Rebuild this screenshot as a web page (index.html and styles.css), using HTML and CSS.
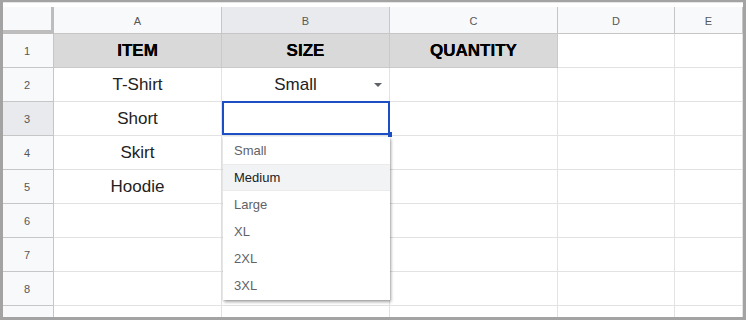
FILE: index.html
```html
<!DOCTYPE html>
<html>
<head>
<meta charset="utf-8">
<link rel="stylesheet" href="styles.css">
</head>
<body>
<div class="frame">
  <div class="sheet">
    <div class="corner"></div>
    <div class="colhead">A</div>
    <div class="colhead active">B</div>
    <div class="colhead">C</div>
    <div class="colhead">D</div>
    <div class="colhead">E</div>

    <div class="rowhead">1</div>
    <div class="cell title">ITEM</div>
    <div class="cell title">SIZE</div>
    <div class="cell title">QUANTITY</div>
    <div class="cell"></div>
    <div class="cell"></div>

    <div class="rowhead">2</div>
    <div class="cell">T-Shirt</div>
    <div class="cell chip">Small<span class="caret"></span></div>
    <div class="cell"></div>
    <div class="cell"></div>
    <div class="cell"></div>

    <div class="rowhead active">3</div>
    <div class="cell">Short</div>
    <div class="cell selected">
      <div class="menu">
        <div class="item">Small</div>
        <div class="item hover">Medium</div>
        <div class="item">Large</div>
        <div class="item">XL</div>
        <div class="item">2XL</div>
        <div class="item">3XL</div>
      </div>
    </div>
    <div class="cell"></div>
    <div class="cell"></div>
    <div class="cell"></div>

    <div class="rowhead">4</div>
    <div class="cell">Skirt</div>
    <div class="cell"></div>
    <div class="cell"></div>
    <div class="cell"></div>
    <div class="cell"></div>

    <div class="rowhead">5</div>
    <div class="cell">Hoodie</div>
    <div class="cell"></div>
    <div class="cell"></div>
    <div class="cell"></div>
    <div class="cell"></div>

    <div class="rowhead">6</div>
    <div class="cell"></div>
    <div class="cell"></div>
    <div class="cell"></div>
    <div class="cell"></div>
    <div class="cell"></div>

    <div class="rowhead">7</div>
    <div class="cell"></div>
    <div class="cell"></div>
    <div class="cell"></div>
    <div class="cell"></div>
    <div class="cell"></div>

    <div class="rowhead">8</div>
    <div class="cell"></div>
    <div class="cell"></div>
    <div class="cell"></div>
    <div class="cell"></div>
    <div class="cell"></div>

    <div class="rowhead">9</div>
    <div class="cell"></div>
    <div class="cell"></div>
    <div class="cell"></div>
    <div class="cell"></div>
    <div class="cell"></div>
  </div>
</div>
</body>
</html>
```

FILE: styles.css
```css
html, body {
  margin: 0;
  padding: 0;
  background: #ffffff;
}

.frame {
  width: 746px;
  height: 320px;
  box-sizing: border-box;
  border-style: solid;
  border-color: #a3a3a3;
  border-width: 2px 3px 3px 3px;
  overflow: hidden;
  background: #ffffff;
  font-family: "Liberation Sans", Arial, sans-serif;
}

.sheet {
  padding-top: 4px;
  display: grid;
  grid-template-columns: 51px 168px 168px 168px 117px 1fr;
  grid-template-rows: 27px;
  grid-auto-rows: 34px;
  border-top: 1px solid #e6e6e6;
}

.corner {
  background: #f8f9fa;
  border-right: 3px solid #bdbdbd;
  border-bottom: 4px solid #bdbdbd;
  box-sizing: border-box;
}

.colhead {
  background: #f8f9fa;
  border-right: 1px solid #c6c6c6;
  border-bottom: 1px solid #c6c6c6;
  box-sizing: border-box;
  display: flex;
  align-items: center;
  justify-content: center;
  font-size: 11px;
  color: #575757;
  padding-top: 1px;
}

.rowhead {
  background: #f8f9fa;
  border-right: 1px solid #c6c6c6;
  border-bottom: 1px solid #c6c6c6;
  box-sizing: border-box;
  display: flex;
  align-items: center;
  justify-content: center;
  font-size: 11px;
  color: #575757;
  padding-right: 2px;
}

.colhead.active,
.rowhead.active {
  background: #e8eaed;
}

.cell {
  border-right: 1px solid #e2e2e2;
  border-bottom: 1px solid #e2e2e2;
  box-sizing: border-box;
  display: flex;
  align-items: center;
  justify-content: center;
  font-size: 17px;
  color: #222222;
  position: relative;
}

.cell.title {
  background: #d9d9d9;
  border-right-color: #c9c9c9;
  border-bottom-color: #c9c9c9;
  font-weight: bold;
  color: #000000;
  text-shadow: 0 0 0.6px #000000;
}

.cell.chip {
  padding-right: 20px;
}

.caret {
  position: absolute;
  right: 7px;
  top: 15px;
  width: 0;
  height: 0;
  border-left: 4px solid transparent;
  border-right: 4px solid transparent;
  border-top: 4px solid #5f6368;
}

.cell.selected::after {
  content: "";
  position: absolute;
  left: 0;
  top: -1px;
  right: -1px;
  bottom: 0;
  border: 2px solid #1d4fc4;
  pointer-events: none;
}

.cell.selected::before {
  content: "";
  position: absolute;
  right: -3px;
  bottom: -2px;
  width: 4px;
  height: 5px;
  background: #1d4fc4;
  z-index: 3;
}

.menu {
  position: absolute;
  top: 35px;
  left: 1px;
  width: 167px;
  box-sizing: border-box;
  padding: 0 0 1px 0;
  background: #ffffff;
  box-shadow: 1px 2px 3px rgba(0, 0, 0, 0.35), 0 0 1px rgba(0, 0, 0, 0.25);
  z-index: 2;
}

.item {
  height: 27px;
  display: flex;
  align-items: center;
  padding-left: 11px;
  font-size: 13px;
  color: #5f6368;
  box-sizing: border-box;
}

.item.hover {
  background: #f1f3f4;
  color: #202124;
  border-top: 1px solid #ebebeb;
  border-bottom: 1px solid #ebebeb;
}
```
